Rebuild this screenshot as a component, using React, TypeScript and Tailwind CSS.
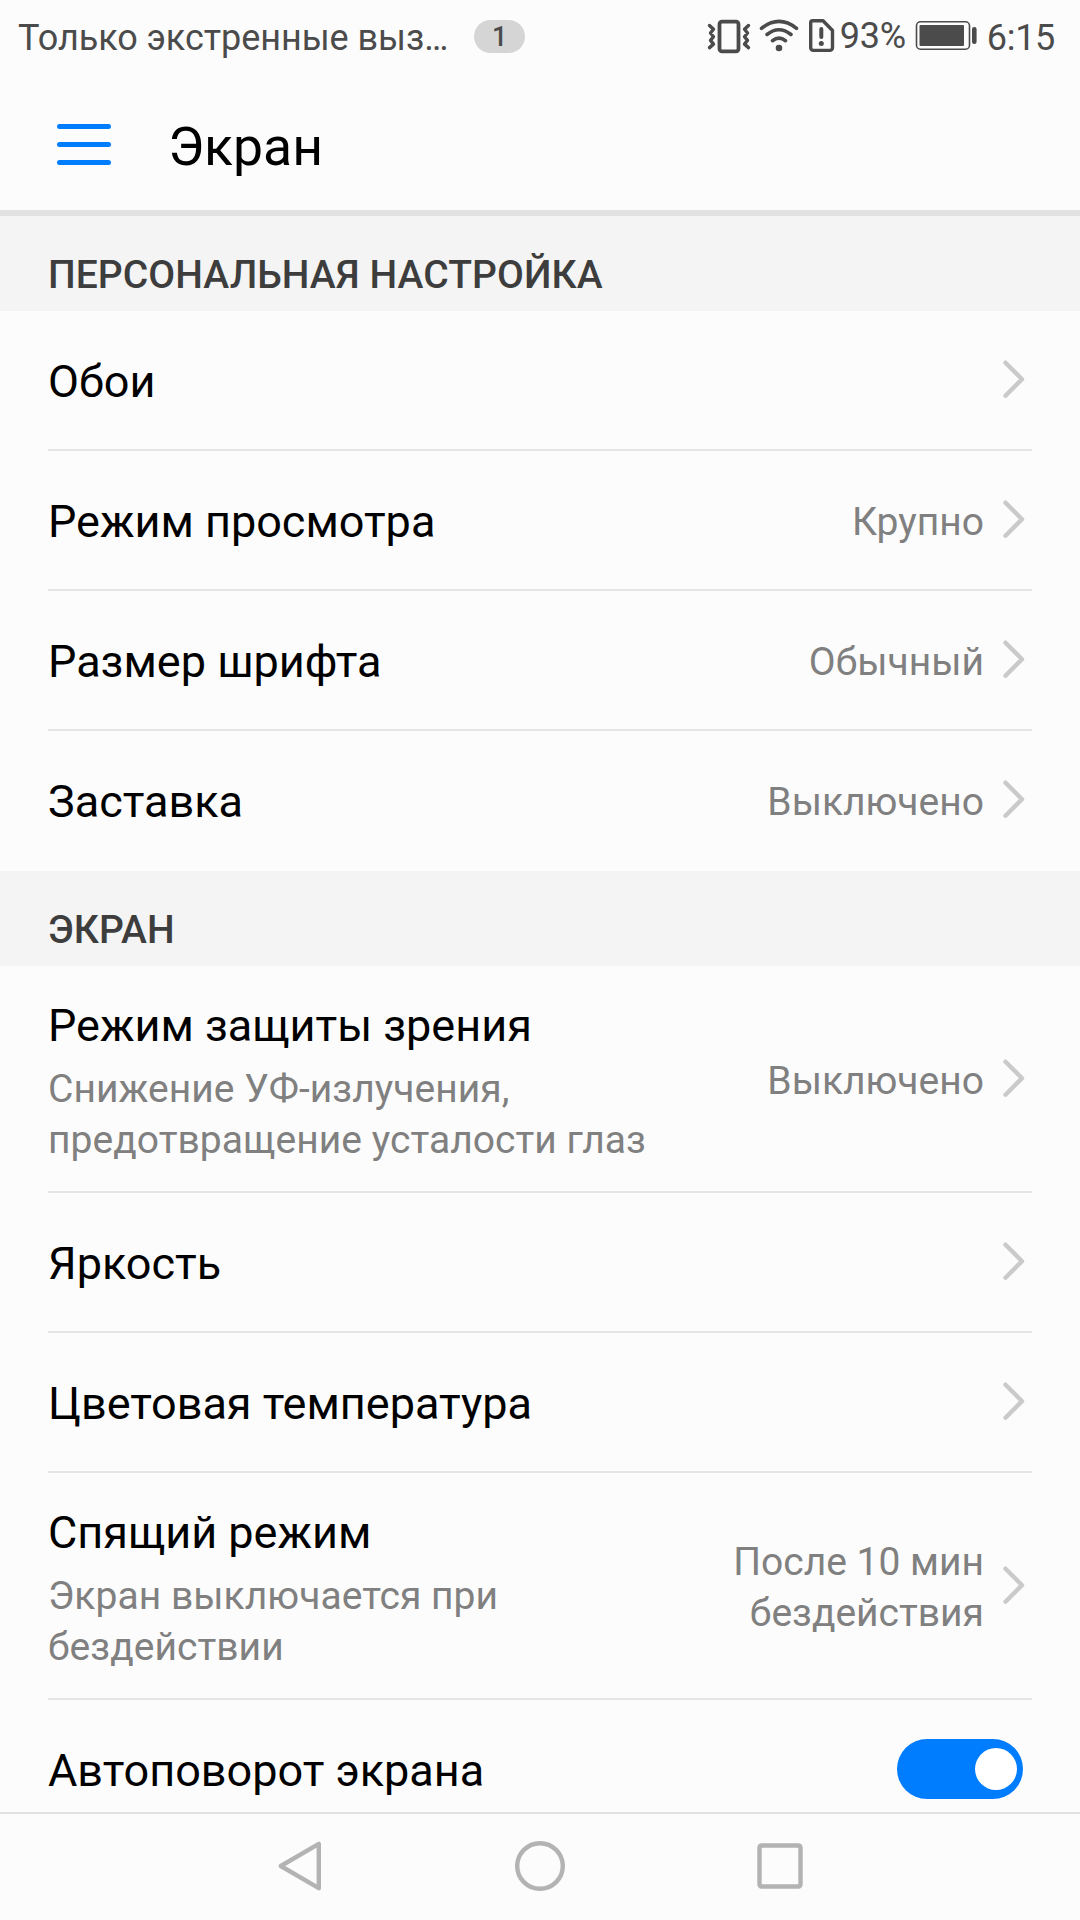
import { useState } from "react";
import { Switch } from "@headlessui/react";

type Item = {
  title: string;
  summary?: string[];
  value?: string[];
};

const personal: Item[] = [
  { title: "Обои" },
  { title: "Режим просмотра", value: ["Крупно"] },
  { title: "Размер шрифта", value: ["Обычный"] },
  { title: "Заставка", value: ["Выключено"] },
];

const screen: Item[] = [
  {
    title: "Режим защиты зрения",
    summary: ["Снижение УФ-излучения,", "предотвращение усталости глаз"],
    value: ["Выключено"],
  },
  { title: "Яркость" },
  { title: "Цветовая температура" },
  {
    title: "Спящий режим",
    summary: ["Экран выключается при", "бездействии"],
    value: ["После 10 мин", "бездействия"],
  },
];

function Chevron() {
  return (
    <svg className="-mt-[2px] mr-[6px] ml-[18px] h-[40px] w-[24px] shrink-0" viewBox="0 0 24 40" fill="none">
      <path d="M3.5 3.7 L20 20.2 L3.5 36.7" stroke="#cacaca" strokeWidth="4.4" strokeLinecap="round" strokeLinejoin="round" />
    </svg>
  );
}

function SectionTitle({ children }: { children: string }) {
  return (
    <h2 className="flex h-[95px] items-center bg-[#f4f4f4] px-12 pt-[22px] text-[39px] leading-[46px] font-medium tracking-[0.07px] text-[#3d3d3d]">
      {children}
    </h2>
  );
}

function Row({ item, last }: { item: Item; last?: boolean }) {
  return (
    <li
      className={`mx-12 flex items-center justify-between border-b-2 ${item.summary ? "h-[227px]" : "h-[140px]"} ${
        last ? "border-transparent" : "border-[#e5e5e5]"
      }`}
    >
      <div className={item.summary ? "pt-[8px]" : "pt-[3px]"}>
        <div className="text-[45px] leading-[53px] text-black">{item.title}</div>
        {item.summary && (
          <div className="mt-[12px] text-[39px] leading-[51px] tracking-[0.04px] text-[#808080]">
            {item.summary.map((line) => (
              <div key={line}>{line}</div>
            ))}
          </div>
        )}
      </div>
      <div className="flex items-center">
        <div className="pt-[5px] text-right text-[39px] leading-[51px] text-[#808080]">
          {item.value?.map((line) => (
            <div key={line}>{line}</div>
          ))}
        </div>
        <Chevron />
      </div>
    </li>
  );
}

function StatusIcons() {
  return (
    <svg className="h-[72px] w-[132px]" viewBox="704 0 132 72" fill="none" stroke="#4b4b4b">
      {/* vibration */}
      <rect x="719.5" y="21.7" width="19" height="29.6" rx="2.5" strokeWidth="3.8" />
      <path
        d="M709.5 25.5l4 3.8-3 3.7 3 3.7-3 3.7 3 3.7-4 3.5M748.5 25.5l-4 3.8 3 3.7-3 3.7 3 3.7-3 3.7 4 3.5"
        strokeWidth="3.4"
        strokeLinecap="round"
        strokeLinejoin="round"
      />
      {/* wi-fi */}
      <path
        d="M761.5 28.3Q779 14.5 796.5 28.3M767 34.5Q779 25 791 34.5M772.5 40.7Q779 35.7 785.5 40.7"
        strokeWidth="3.6"
        strokeLinecap="round"
      />
      <circle cx="779" cy="48" r="3.3" fill="#4b4b4b" stroke="none" />
      {/* missing sim card */}
      <path
        d="M812 20.7h11l9.500 9.800V47.800a2.600 2.600 0 0 1-2.600 2.600H813.300a2.600 2.600 0 0 1-2.600-2.600V22.500a1.800 1.800 0 0 1 1.800-1.800z"
        strokeWidth="3.4"
        strokeLinejoin="round"
      />
      <path d="M821.3 29v8" strokeWidth="4" strokeLinecap="round" />
      <circle cx="821.3" cy="43.5" r="2.5" fill="#4b4b4b" stroke="none" />
    </svg>
  );
}

function Battery() {
  return (
    <svg className="ml-[8px] h-[72px] w-[64px]" viewBox="914 0 64 72">
      <rect x="916.5" y="21.8" width="53" height="27.4" rx="4" fill="none" stroke="#4b4b4b" strokeWidth="1.6" />
      <rect x="919.5" y="25" width="44.5" height="21" rx="1" fill="#4b4b4b" />
      <rect x="972" y="27" width="4.6" height="17" rx="2.2" fill="#4b4b4b" />
    </svg>
  );
}

function StatusBar() {
  return (
    <div className="flex h-[72px] shrink-0 items-center text-[#4b4b4b]">
      <span className="ml-[18px] pt-[3px] text-[36px] leading-[42px] tracking-[-0.05px] whitespace-nowrap">
        Только экстренные выз…
      </span>
      <span className="ml-[26px] flex h-[33px] w-[51px] items-center justify-center rounded-full bg-[#d5d5d5] pt-[2px] text-[27px] font-medium">
        1
      </span>
      <div className="ml-auto flex items-center pr-[25px]">
        <StatusIcons />
        <span className="ml-[4px] text-[36px] leading-[42px] tracking-[-0.25px]">93%</span>
        <Battery />
        <span className="ml-[9px] pt-[3px] text-[36px] leading-[42px] tracking-[-0.3px]">6:15</span>
      </div>
    </div>
  );
}

function NavBar() {
  return (
    <nav className="flex h-[108px] shrink-0 items-center justify-center gap-[186px] border-t-2 border-[#e1e1e1] bg-[#fcfcfc] pb-[2px]">
      <svg className="size-[54px]" viewBox="0 0 54 54" fill="none" stroke="#b3b3b3" strokeWidth="4.4" strokeLinejoin="round">
        <path d="M45.8 4.8V49.2L7.8 27z" />
      </svg>
      <svg className="size-[54px]" viewBox="0 0 54 54" fill="none" stroke="#b3b3b3" strokeWidth="4.4">
        <circle cx="27" cy="27" r="22.8" />
      </svg>
      <svg className="size-[54px]" viewBox="0 0 54 54" fill="none" stroke="#b3b3b3" strokeWidth="4.4">
        <rect x="6.5" y="6.5" width="41" height="41" rx="2" />
      </svg>
    </nav>
  );
}

export default function App() {
  const [rotate, setRotate] = useState(true);

  return (
    <div className="flex h-[1920px] w-[1080px] flex-col overflow-hidden bg-[#fcfcfc] font-['Roboto',sans-serif]">
      <StatusBar />
      <header className="flex h-[144px] shrink-0 items-center border-b-[6px] border-[#e1e1e1] pt-[6px] pl-[57px]">
        <button className="flex flex-col gap-[13px]" aria-label="Меню">
          <span className="h-[5px] w-[54px] rounded-full bg-[#007dff]" />
          <span className="h-[5px] w-[54px] rounded-full bg-[#007dff]" />
          <span className="h-[5px] w-[54px] rounded-full bg-[#007dff]" />
        </button>
        <h1 className="ml-[57px] pt-[5px] text-[53.5px] leading-[64px] text-black">Экран</h1>
      </header>

      <main className="min-h-0 flex-1 overflow-hidden">
        <SectionTitle>ПЕРСОНАЛЬНАЯ НАСТРОЙКА</SectionTitle>
        <ul>
          {personal.map((item, i) => (
            <Row key={item.title} item={item} last={i === personal.length - 1} />
          ))}
        </ul>
        <SectionTitle>ЭКРАН</SectionTitle>
        <ul>
          {screen.map((item) => (
            <Row key={item.title} item={item} />
          ))}
          <li className="mx-12 flex h-[138px] items-center justify-between">
            <span className="pt-[3px] text-[45px] leading-[53px] text-black">Автоповорот экрана</span>
            <Switch
              checked={rotate}
              onChange={setRotate}
              aria-label="Автоповорот экрана"
              className="mr-[9px] flex h-[60px] w-[126px] items-center rounded-full bg-[#cacaca] px-[6px] data-checked:justify-end data-checked:bg-[#007dff]"
            >
              <span className="size-[42px] rounded-full bg-white" />
            </Switch>
          </li>
        </ul>
      </main>

      <NavBar />
    </div>
  );
}
